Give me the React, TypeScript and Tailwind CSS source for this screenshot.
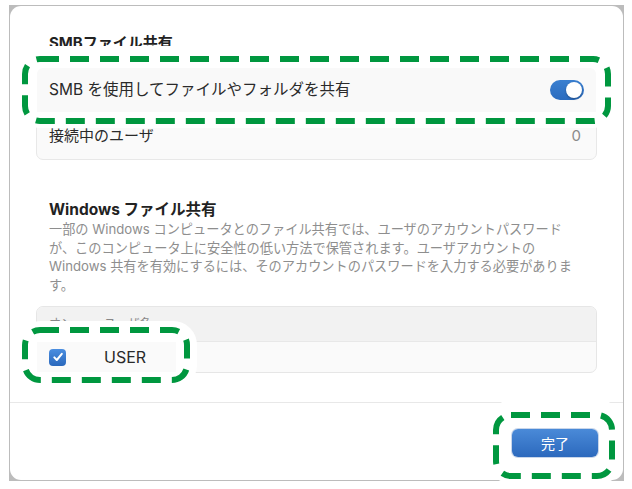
import React from 'react';

const font = "font-['Inter','Noto_Sans_CJK_JP',sans-serif]";

// green dashed marker drawn over the screenshot, with its white halo
const Marker = ({ halo, dash }: { halo: string; dash: string }) => (
  <>
    <div className={`absolute -z-10 bg-white rounded-[24px] ${halo}`} />
    <div className={`absolute -z-10 ${dash}`}>
      <svg className="block w-full h-full">
        <rect
          x="3"
          y="3"
          rx="15"
          className="w-[calc(100%-6px)] h-[calc(100%-6px)]"
          fill="none"
          stroke="#00973f"
          strokeWidth="6"
          strokeDasharray="19 11"
        />
      </svg>
    </div>
  </>
);

const Toggle = () => (
  <div className="flex justify-end items-center w-[34px] h-[20px] rounded-full bg-gradient-to-b from-[#3a7fd0] to-[#2b6cbf] p-[2px]">
    <div className="w-[16px] h-[16px] rounded-full bg-white shadow-[0_1px_2px_rgba(0,0,0,0.3)]" />
  </div>
);

const Checkbox = () => (
  <div className="flex items-center justify-center w-[17px] h-[17px] rounded-[4px] bg-gradient-to-b from-[#4b8ee0] to-[#2a68bc]">
    <svg width="12" height="12" viewBox="0 0 12 12" fill="none">
      <path d="M2.3 6.4 L4.8 9 L9.8 2.8" stroke="white" strokeWidth="2" strokeLinecap="round" strokeLinejoin="round" />
    </svg>
  </div>
);

export default function App() {
  return (
    <div className={`w-[632px] h-[489px] overflow-hidden bg-white pt-[5px] pl-[9px] ${font}`}>
      <div className="w-[615px] h-[476px] bg-[#bcbcbc] p-[1px]">
        <div className="flex flex-col h-full bg-white rounded-[11px]">
          {/* body */}
          <div className="flex-1 px-[26px] pt-[27px]">
            <h2 className="px-[13px] text-[15px] font-bold leading-[20px] text-[#222]">SMBファイル共有</h2>

            <div className="mt-[14px] rounded-[7px] border border-[#e8e8e8] bg-[#fafafa]">
              <div className="relative z-10">
                <Marker halo="-top-[22px] -bottom-[16px] -left-[21px] -right-[21px]" dash="-top-[12px] -bottom-[12px] -left-[15px] -right-[15px]" />
                <div className="flex items-center justify-between h-[44px] pl-[12px] pr-[12px] bg-[#f9f9f9] rounded-t-[6px]">
                  <span className="text-[15.5px] text-[#2a2a2a]">SMB を使用してファイルやフォルダを共有</span>
                  <Toggle />
                </div>
              </div>
              <div className="flex items-center justify-between h-[47px] px-[12px] border-t border-[#ececec]">
                <span className="text-[15px] text-[#2a2a2a]">接続中のユーザ</span>
                <span className="text-[15px] text-[#8a8a8a] pr-[3px]">0</span>
              </div>
            </div>

            <h2 className="mt-[40px] px-[13px] text-[15.5px] font-bold leading-[20px] text-[#222]">Windows ファイル共有</h2>
            <p className="px-[13px] text-[13.2px] leading-[18.5px] text-[#8e8e8e] whitespace-nowrap">
              一部の Windows コンピュータとのファイル共有では、ユーザのアカウントパスワード
              <br />
              が、このコンピュータ上に安全性の低い方法で保管されます。ユーザアカウントの
              <br />
              Windows 共有を有効にするには、そのアカウントのパスワードを入力する必要がありま
              <br />
              す。
            </p>

            <div className="mt-[12px] rounded-[7px] border border-[#e6e6e6] bg-[#fafafa]">
              <div className="flex items-center h-[34px] bg-[#f2f2f2] rounded-t-[6px] text-[12px] text-[#888]">
                <span className="pl-[12px] w-[67px]">オン</span>
                <span>ユーザ名</span>
              </div>
              <div className="flex h-[31px] border-t border-[#e8e8e8]">
                <div className="relative z-10 w-[139px]">
                  <Marker halo="-top-[21px] -bottom-[17px] -left-[20px] -right-[21px]" dash="-top-[15px] -bottom-[11px] -left-[15px] -right-[14px]" />
                  <div className="flex items-center h-full pl-[12px] bg-[#fafafa]">
                    <Checkbox />
                    <span className="ml-[38px] text-[16px] text-[#2a2a2a]">USER</span>
                  </div>
                </div>
              </div>
            </div>
          </div>

          {/* footer */}
          <div className="flex justify-end h-[78px] border-t border-[#e8e8e8] pt-[26px] pr-[25px]">
            <div className="relative z-10 h-[28px]">
              <Marker halo="-top-[29px] -bottom-[27px] -left-[24px] -right-[25px]" dash="-top-[17px] -bottom-[22px] -left-[19px] -right-[17px]" />
              <button className="flex items-center justify-center w-[86px] h-[28px] rounded-[6px] bg-gradient-to-b from-[#4a8ad8] to-[#2c69bd] text-[14px] text-white shadow-[0_0_0_1px_rgba(40,90,170,0.25)]">
                完了
              </button>
            </div>
          </div>
        </div>
      </div>
    </div>
  );
}
